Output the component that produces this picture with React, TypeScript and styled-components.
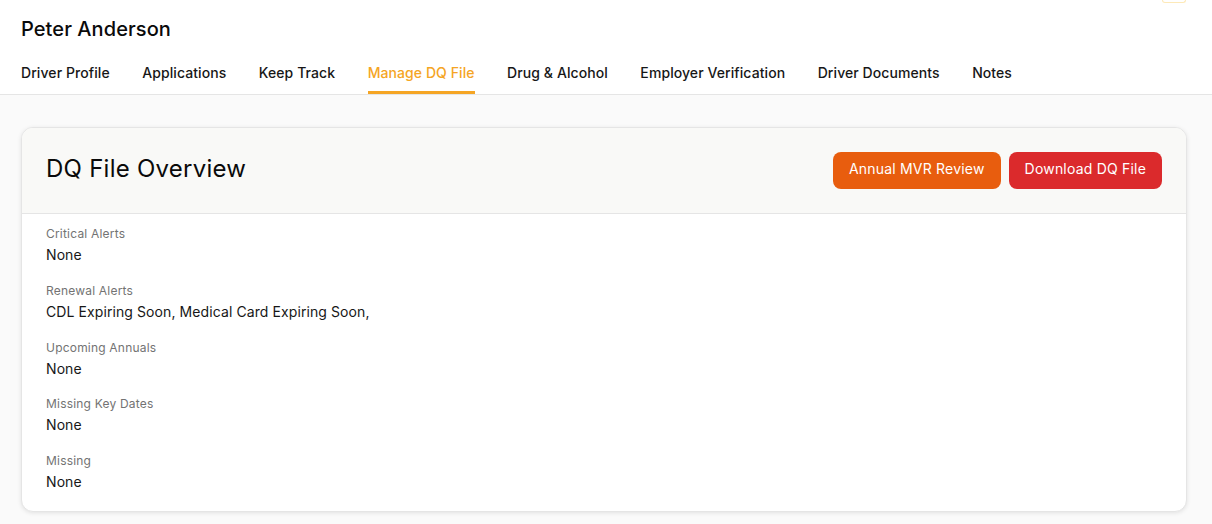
import React from "react";
import styled, { createGlobalStyle } from "styled-components";

const tabs = [
  "Driver Profile",
  "Applications",
  "Keep Track",
  "Manage DQ File",
  "Drug & Alcohol",
  "Employer Verification",
  "Driver Documents",
  "Notes",
];

const fields = [
  { label: "Critical Alerts", value: "None" },
  { label: "Renewal Alerts", value: "CDL Expiring Soon, Medical Card Expiring Soon," },
  { label: "Upcoming Annuals", value: "None" },
  { label: "Missing Key Dates", value: "None" },
  { label: "Missing", value: "None" },
];

const GlobalStyle = createGlobalStyle`
  html, body {
    margin: 0;
    padding: 0;
    background: #fafafa;
    font-family: Inter, "Liberation Sans", sans-serif;
    color: #171717;
  }
`;

const Page = styled.div`
  width: 1212px;
  height: 524px;
  overflow: hidden;
`;

const Header = styled.header`
  background: #fff;
  border-bottom: 1px solid #e5e5e5;
`;

const TopStrip = styled.div`
  height: 3px;
  padding: 0 26px 0 21px;
  display: flex;
  justify-content: flex-end;
  overflow: hidden;
`;

const SmallAction = styled.div`
  width: 24px;
  height: 3px;
  box-sizing: border-box;
  border: 1px solid #fde9b8;
  border-top: none;
  border-radius: 0 0 4px 4px;
`;

const Name = styled.h1`
  margin: 0;
  padding: 12px 21px 0;
  font-size: 20px;
  line-height: 28px;
  font-weight: 500;
  letter-spacing: 0.08px;
  color: #0a0a0a;
`;

const Tabs = styled.nav`
  display: flex;
  gap: 32.5px;
  padding: 20px 21px 0;
`;

const Tab = styled.div<{ $active?: boolean }>`
  height: 28px;
  font-size: 14px;
  line-height: 20px;
  font-weight: 500;
  letter-spacing: 0.08px;
  color: ${(p) => (p.$active ? "#f5a524" : "#171717")};
  border-bottom: 3px solid ${(p) => (p.$active ? "#f5a524" : "transparent")};
`;

const Content = styled.main`
  padding: 32px 25px 0 21px;
`;

const Card = styled.section`
  background: #fff;
  border: 1px solid #e5e5e5;
  border-radius: 12px;
  box-shadow: 0 1px 4px rgba(0, 0, 0, 0.1);
  overflow: hidden;
`;

const CardHeader = styled.div`
  height: 86px;
  box-sizing: border-box;
  padding: 0 24px;
  display: flex;
  align-items: center;
  justify-content: space-between;
  background: #f9f9f7;
  border-bottom: 1px solid #e5e5e5;
`;

const Title = styled.h2`
  margin: 0 0 3px;
  font-size: 24px;
  line-height: 32px;
  font-weight: 400;
  letter-spacing: 0.25px;
  color: #0a0a0a;
`;

const Actions = styled.div`
  display: flex;
  gap: 8px;
`;

const ActionButton = styled.button<{ $bg: string }>`
  height: 37px;
  padding: 0 16px 5px;
  border: none;
  border-radius: 8px;
  background: ${(p) => p.$bg};
  color: #fff;
  font-family: inherit;
  font-size: 14px;
  font-weight: 400;
  letter-spacing: 0.2px;
`;

const Fields = styled.div`
  padding: 12px 24px 19px;
  display: flex;
  flex-direction: column;
  gap: 17.75px;
`;

const Label = styled.div`
  font-size: 12px;
  line-height: 16px;
  letter-spacing: 0.2px;
  color: #737373;
  margin-bottom: 3px;
`;

const Value = styled.div`
  font-size: 14px;
  line-height: 20px;
  letter-spacing: 0.09px;
  color: #171717;
`;

export default function App() {
  return (
    <Page>
      <GlobalStyle />
      <Header>
        <TopStrip>
          <SmallAction />
        </TopStrip>
        <Name>Peter Anderson</Name>
        <Tabs>
          {tabs.map((t) => (
            <Tab key={t} $active={t === "Manage DQ File"}>
              {t}
            </Tab>
          ))}
        </Tabs>
      </Header>
      <Content>
        <Card>
          <CardHeader>
            <Title>DQ File Overview</Title>
            <Actions>
              <ActionButton $bg="#e85d0e">Annual MVR Review</ActionButton>
              <ActionButton $bg="#db2a2c">Download DQ File</ActionButton>
            </Actions>
          </CardHeader>
          <Fields>
            {fields.map((f) => (
              <div key={f.label}>
                <Label>{f.label}</Label>
                <Value>{f.value}</Value>
              </div>
            ))}
          </Fields>
        </Card>
      </Content>
    </Page>
  );
}
